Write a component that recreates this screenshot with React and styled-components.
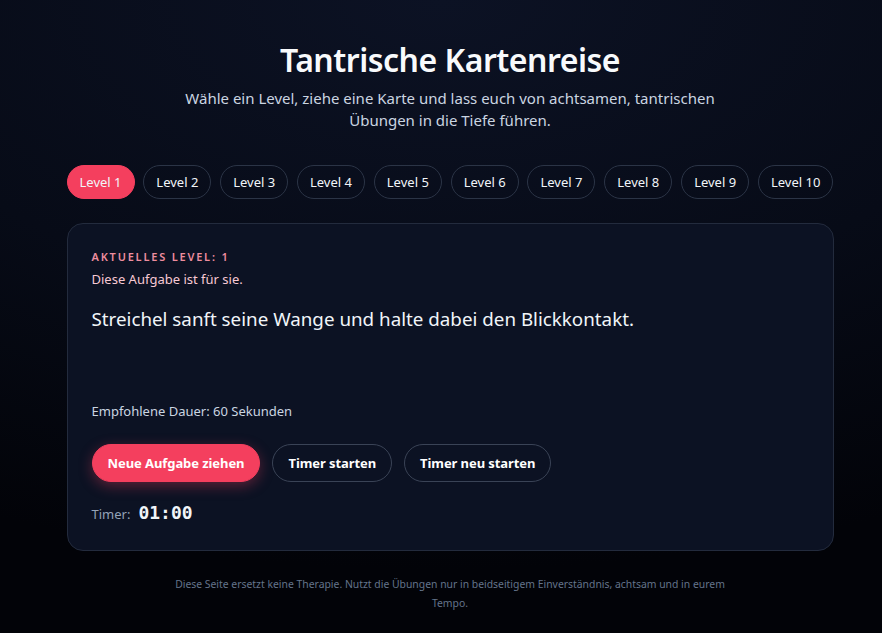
import React from 'react';
import styled, { createGlobalStyle } from 'styled-components';

const GlobalStyle = createGlobalStyle`
  html, body {
    margin: 0;
    padding: 0;
    min-height: 100%;
  }
  body {
    font-family: "Segoe UI", "Noto Sans", sans-serif;
    background: radial-gradient(ellipse 120% 90% at 50% 0%, #0c1224 0%, #070b17 55%, #020308 100%);
    color: #e5e7eb;
    min-height: 633px;
  }
`;

const Page = styled.div`
  padding: 33px 0 20px 18px;
  display: flex;
  flex-direction: column;
  align-items: center;
`;

const Main = styled.div`
  width: 767px;
  display: flex;
  flex-direction: column;
  align-items: center;
`;

const Title = styled.h1`
  margin: 0;
  font-size: 32px;
  font-weight: 600;
  line-height: 54px;
  color: #f8fafc;
  letter-spacing: -0.5px;
`;

const Subtitle = styled.p`
  margin: 0;
  width: 540px;
  text-align: center;
  font-size: 15px;
  line-height: 22px;
  color: #cbd5e1;
`;

const Levels = styled.div`
  margin-top: 34px;
  align-self: stretch;
  display: flex;
  justify-content: space-between;
`;

const Pill = styled.button`
  font-family: inherit;
  font-size: 13px;
  height: 34px;
  padding: 0 12px;
  border-radius: 17px;
  border: 1px solid ${p => (p.$active ? '#f43f5e' : '#2b3446')};
  background: ${p => (p.$active ? '#f43f5e' : 'transparent')};
  color: #f1f5f9;
  cursor: pointer;
`;

const Card = styled.div`
  margin-top: 24px;
  align-self: stretch;
  box-sizing: border-box;
  height: 328px;
  padding: 26px 24px 0;
  background: #0c1223;
  border: 1px solid #232b3d;
  border-radius: 16px;
`;

const Kicker = styled.div`
  font-size: 11px;
  font-weight: 600;
  letter-spacing: 1.8px;
  text-transform: uppercase;
  color: #ee8d9f;
  line-height: 14px;
`;

const ForWhom = styled.div`
  margin-top: 6px;
  font-size: 13px;
  line-height: 18px;
  color: #f7c9d3;
`;

const Task = styled.div`
  margin-top: 18px;
  min-height: 96px;
  font-size: 18.8px;
  line-height: 26px;
  color: #f1f5f9;
`;

const Duration = styled.div`
  font-size: 13px;
  line-height: 18px;
  color: #cbd5e1;
`;

const Actions = styled.div`
  margin-top: 24px;
  display: flex;
  gap: 12px;
`;

const ActionButton = styled.button`
  font-family: inherit;
  font-size: 13px;
  font-weight: 700;
  letter-spacing: -0.08px;
  height: 38px;
  padding: 0 15px;
  border-radius: 19px;
  cursor: pointer;
  color: #ffffff;
  border: 1px solid ${p => (p.$primary ? '#f43f5e' : '#3a4356')};
  background: ${p => (p.$primary ? '#f43f5e' : 'transparent')};
  box-shadow: ${p => (p.$primary ? '0 4px 14px rgba(244, 63, 94, 0.35)' : 'none')};
`;

const TimerRow = styled.div`
  margin-top: 20px;
  display: flex;
  align-items: baseline;
  gap: 8px;
`;

const TimerLabel = styled.span`
  font-size: 13px;
  color: #94a3b8;
`;

const TimerValue = styled.span`
  font-family: "DejaVu Sans Mono", "Liberation Mono", monospace;
  font-size: 18px;
  font-weight: 700;
  color: #f1f5f9;
`;

const Footer = styled.p`
  margin: 24px 0 0;
  width: 560px;
  text-align: center;
  font-size: 10.4px;
  line-height: 19px;
  color: #64748b;
`;

const levels = Array.from({ length: 10 }, (_, i) => i + 1);

const App = () => {
  const [level, setLevel] = React.useState(1);

  return (
    <>
      <GlobalStyle />
      <Page>
        <Main>
          <Title>Tantrische Kartenreise</Title>
          <Subtitle>
            Wähle ein Level, ziehe eine Karte und lass euch von achtsamen, tantrischen Übungen in die Tiefe führen.
          </Subtitle>
          <Levels>
            {levels.map(l => (
              <Pill key={l} $active={l === level} onClick={() => setLevel(l)}>
                Level {l}
              </Pill>
            ))}
          </Levels>
          <Card>
            <Kicker>Aktuelles Level: {level}</Kicker>
            <ForWhom>Diese Aufgabe ist für sie.</ForWhom>
            <Task>Streichel sanft seine Wange und halte dabei den Blickkontakt.</Task>
            <Duration>Empfohlene Dauer: 60 Sekunden</Duration>
            <Actions>
              <ActionButton $primary>Neue Aufgabe ziehen</ActionButton>
              <ActionButton>Timer starten</ActionButton>
              <ActionButton>Timer neu starten</ActionButton>
            </Actions>
            <TimerRow>
              <TimerLabel>Timer:</TimerLabel>
              <TimerValue>01:00</TimerValue>
            </TimerRow>
          </Card>
          <Footer>
            Diese Seite ersetzt keine Therapie. Nutzt die Übungen nur in beidseitigem Einverständnis, achtsam und in eurem Tempo.
          </Footer>
        </Main>
      </Page>
    </>
  );
};

export default App;
